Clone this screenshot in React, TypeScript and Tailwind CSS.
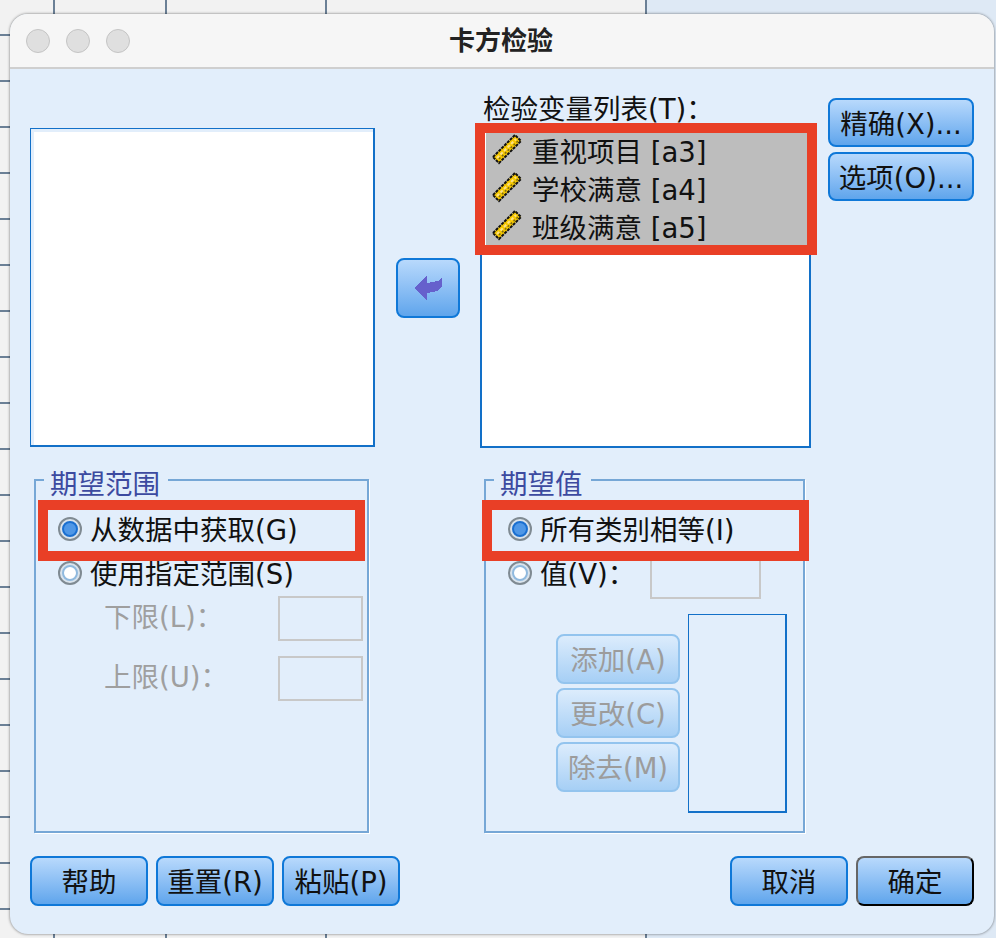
import type { ReactNode } from 'react';

const cjk = { fontFamily: '"DejaVu Sans", "Noto Sans CJK SC", sans-serif' };

function Ruler() {
  return (
    <svg width="32" height="32" viewBox="0 0 32 32" className="shrink-0">
      <path d="M2 24 L24 2 L30 8 L8 30 Z" fill="#f6c800" stroke="#111" strokeWidth="2" strokeDasharray="3 1" />
      <path d="M6 25 L25 6" stroke="#fbe08a" strokeWidth="2" strokeDasharray="3 2" />
      <path d="M8 26 L27 8" stroke="#7a6a18" strokeWidth="1.5" strokeDasharray="2 2" />
    </svg>
  );
}

function Arrow() {
  return (
    <svg width="29" height="27" viewBox="0 0 29 27" shapeRendering="crispEdges">
      <path d="M0 13 L13 1 L13 8 L24 6 L28 2 L28 11 L23 16 L13 18 L13 26 Z" fill="#6660cc" />
    </svg>
  );
}

function Radio({ checked }: { checked?: boolean }) {
  return (
    <span className="w-6 h-6 mb-[3px] shrink-0 rounded-full border-2 border-[#7f8a92] bg-[#d9e3ec] flex items-center justify-center">
      <span
        className={
          'w-4 h-4 rounded-full border-2 ' +
          (checked ? 'bg-[#4f97e6] border-[#1a6fd0]' : 'bg-white border-[#8fb9de]')
        }
      />
    </span>
  );
}

function Btn({
  children,
  className,
  disabled,
  isDefault,
}: {
  children: ReactNode;
  className: string;
  disabled?: boolean;
  isDefault?: boolean;
}) {
  let look = 'border-[#0f78d8] bg-gradient-to-b from-[#b8d9fc] to-[#5fa5ec] text-[#111]';
  if (disabled) look = 'border-[#93c4ee] bg-gradient-to-b from-[#dcecfc] to-[#a6cff5] text-[#9c9c9c]';
  if (isDefault) look = 'border-[#666] border-r-black border-b-black bg-gradient-to-b from-[#b8d9fc] to-[#5fa5ec] text-[#111]';
  return (
    <div
      className={
        'flex items-center justify-center shrink-0 border-2 rounded-[8px] text-[27.5px] leading-none whitespace-nowrap ' +
        look +
        ' ' +
        className
      }
    >
      {children}
    </div>
  );
}

function Group({ title, className, children }: { title: string; className: string; children: ReactNode }) {
  return (
    <div className={'relative h-[354px] border-2 border-[#76a7d6] shadow-[1px_1px_0_#fff] ' + className}>
      <span className="absolute left-[8px] top-[-15px] pl-[6px] pr-[8px] bg-[#e2eefb] text-[#3c4aa0] text-[27.5px] leading-[36px]">
        {title}
      </span>
      {children}
    </div>
  );
}

function Highlight({ className }: { className: string }) {
  return <div className={'absolute border-[10px] border-[#e93f26] pointer-events-none ' + className} />;
}

function RadioRow({ checked, label, className }: { checked?: boolean; label: string; className: string }) {
  return (
    <div className={'flex items-center gap-[8px] text-[27.5px] leading-[36px] text-[#111] whitespace-nowrap ' + className}>
      <Radio checked={checked} />
      <span>{label}</span>
    </div>
  );
}

function Limit({ label, className }: { label: string; className: string }) {
  return (
    <div className={'flex items-center justify-between ' + className}>
      <span className="pb-[3px] text-[#9f9f9f] text-[27.5px] leading-[36px]">{label}</span>
      <div className="w-[85px] h-[45px] border-2 border-[#c8c8c8]" />
    </div>
  );
}

const vars = ['重视项目 [a3]', '学校满意 [a4]', '班级满意 [a5]'];

export default function App() {
  return (
    <div
      className="relative w-[996px] h-[938px] overflow-hidden bg-[linear-gradient(90deg,#f2f2f2_646px,#dee9f5_646px)]"
      style={cjk}
    >
      {/* spreadsheet behind the dialog */}
      <div className="absolute left-0 top-0 w-[648px] h-full bg-[repeating-linear-gradient(180deg,transparent_0,transparent_34px,#6b8096_34px,#6b8096_36px,transparent_36px,transparent_46px),linear-gradient(90deg,transparent_53px,#6b8096_53px,#6b8096_55px,transparent_55px,transparent_165px,#6b8096_165px,#6b8096_167px,transparent_167px,transparent_325px,#6b8096_325px,#6b8096_327px,transparent_327px,transparent_645px,#6b8096_645px,#6b8096_647px,transparent_647px)]" />

      <div className="absolute left-[10px] top-[14px] w-[984px] h-[920px] rounded-[18px] overflow-hidden bg-[#e2eefb] shadow-[0_0_3px_rgba(0,0,0,0.55)]">
        <div className="relative h-[55px] bg-[#f6f6f6] border-b-2 border-[#cfcfcf] flex items-center pl-[16px] gap-[16px]">
          <span className="w-6 h-6 rounded-full bg-[#dfdfdf] border border-[#c4c4c4]" />
          <span className="w-6 h-6 rounded-full bg-[#dfdfdf] border border-[#c4c4c4]" />
          <span className="w-6 h-6 rounded-full bg-[#dfdfdf] border border-[#c4c4c4]" />
          <span className="absolute inset-x-0 text-center text-[26px] font-bold text-[#222] leading-none pr-[2px]">
            卡方检验
          </span>
        </div>

        <div className="relative pl-[20px] pr-[20px]">
          <div className="flex h-[378px]">
            <div className="w-[345px] h-[319px] mt-[59px] border border-r-2 border-b-2 border-[#1270c8] bg-white shadow-[inset_3px_3px_0_#e2eefb]" />
            <Btn className="w-[64px] h-[60px] ml-[21px] mt-[189px]">
              <Arrow />
            </Btn>
            <div className="w-[331px] ml-[20px] mt-[22px]">
              <div className="ml-[3px] text-[27.5px] leading-[36px] text-[#111] whitespace-nowrap">检验变量列表(T)：</div>
              <div className="relative h-[320px] mt-[1px] border-2 border-[#1270c8] bg-white">
                <div className="absolute left-[4px] top-[3px] w-[322px] h-[112px] bg-[#bdbdbd]">
                  <div className="-mt-[3px]">
                    {vars.map((v) => (
                      <div key={v} className="h-[38px] flex items-center pl-[5px] gap-[9px] text-[27.5px] text-[#111] whitespace-nowrap">
                        <Ruler />
                        <span className="pt-[8px]">{v}</span>
                      </div>
                    ))}
                  </div>
                </div>
              </div>
            </div>
            <div className="ml-[17px] mt-[29px] flex flex-col gap-[5px]">
              <Btn className="w-[146px] h-[49px] pt-[4px]">精确(X)...</Btn>
              <Btn className="w-[146px] h-[49px] pt-[4px]">选项(O)...</Btn>
            </div>
          </div>

          <div className="flex mt-[32px]">
            <Group title="期望范围" className="w-[335px] ml-[4px]">
              <RadioRow checked label="从数据中获取(G)" className="mt-[31px] ml-[22px]" />
              <RadioRow label="使用指定范围(S)" className="mt-[8px] ml-[22px]" />
              <Limit label="下限(L)：" className="mt-[4px] ml-[68px] mr-[4px]" />
              <Limit label="上限(U)：" className="mt-[15px] ml-[68px] mr-[4px]" />
            </Group>
            <Group title="期望值" className="w-[321px] ml-[115px]">
              <RadioRow checked label="所有类别相等(I)" className="mt-[31px] ml-[22px]" />
              <div className="flex items-start">
                <RadioRow label="值(V)：" className="mt-[8px] ml-[22px]" />
                <div className="w-[111px] h-[46px] border-2 border-[#c8c8c8] ml-[15px] mt-[5px]" />
              </div>
              <div className="flex mt-[15px] ml-[70px]">
                <div className="flex flex-col gap-[4px] mt-[20px]">
                  <Btn disabled className="w-[124px] h-[50px] pt-[4px]">添加(A)</Btn>
                  <Btn disabled className="w-[124px] h-[50px] pt-[4px]">更改(C)</Btn>
                  <Btn disabled className="w-[124px] h-[50px] pt-[4px]">除去(M)</Btn>
                </div>
                <div className="w-[99px] h-[199px] ml-[8px] border border-r-2 border-b-2 border-[#1270c8]" />
              </div>
            </Group>
          </div>

          <div className="flex mt-[23px]">
            <Btn className="w-[118px] h-[50px] pt-[4px]">帮助</Btn>
            <Btn className="w-[118px] h-[50px] ml-[8px] pt-[4px]">重置(R)</Btn>
            <Btn className="w-[118px] h-[50px] ml-[8px] pt-[4px]">粘贴(P)</Btn>
            <Btn className="w-[118px] h-[50px] ml-auto pt-[4px]">取消</Btn>
            <Btn isDefault className="w-[118px] h-[50px] ml-[8px] pt-[4px]">确定</Btn>
          </div>

          <Highlight className="left-[465px] top-[54px] w-[342px] h-[132px]" />
          <Highlight className="left-[28px] top-[431px] w-[327px] h-[61px]" />
          <Highlight className="left-[472px] top-[431px] w-[327px] h-[61px]" />
        </div>
      </div>
    </div>
  );
}
